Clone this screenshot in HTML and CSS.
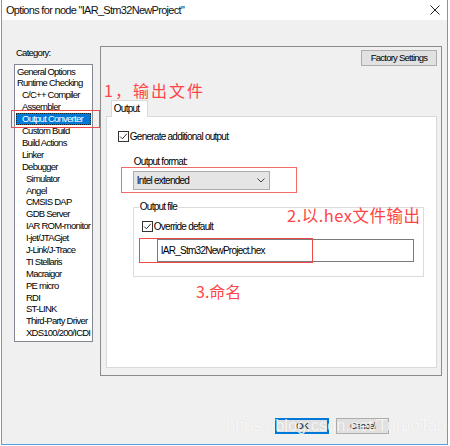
FILE: index.html
```html
<!DOCTYPE html>
<html>
<head>
<meta charset="utf-8">
<link rel="stylesheet" href="styles.css">
</head>
<body>
<div class="window">
  <div class="titlebar">
    <span class="title">Options for node "IAR_Stm32NewProject"</span>
    <svg class="close" width="10" height="10" viewBox="0 0 10 10"><path d="M0.5 0.5L9.5 9.5M9.5 0.5L0.5 9.5" stroke="#222" stroke-width="1" fill="none"/></svg>
  </div>
  <div class="body">
    <div class="main">
      <div class="category">
        <div class="cat-label">Category:</div>
        <ul class="list">
          <li class="top">General Options</li>
          <li class="top">Runtime Checking</li>
          <li class="sub">C/C++ Compiler</li>
          <li class="sub">Assembler</li>
          <li class="sub selected">Output Converter</li>
          <li class="sub">Custom Build</li>
          <li class="sub">Build Actions</li>
          <li class="sub">Linker</li>
          <li class="sub">Debugger</li>
          <li class="sub2">Simulator</li>
          <li class="sub2">Angel</li>
          <li class="sub2">CMSIS DAP</li>
          <li class="sub2">GDB Server</li>
          <li class="sub2">IAR ROM-monitor</li>
          <li class="sub2">I-jet/JTAGjet</li>
          <li class="sub2">J-Link/J-Trace</li>
          <li class="sub2">TI Stellaris</li>
          <li class="sub2">Macraigor</li>
          <li class="sub2">PE micro</li>
          <li class="sub2">RDI</li>
          <li class="sub2">ST-LINK</li>
          <li class="sub2">Third-Party Driver</li>
          <li class="sub2">XDS100/200/ICDI</li>
        </ul>
      </div>
      <div class="panel">
        <div class="panel-top">
          <button class="btn factory">Factory Settings</button>
        </div>
        <div class="tabs">
          <div class="tab">Output</div>
        </div>
        <div class="page">
          <label class="check-row first">
            <svg class="cb" width="11" height="11" viewBox="0 0 11 11"><rect x="0.5" y="0.5" width="10" height="10" fill="#fff" stroke="#333"/><path d="M2.2 5.6L4.4 7.8L8.8 2.8" stroke="#333" stroke-width="1" fill="none"/></svg>
            <span>Generate additional output</span>
          </label>
          <div class="fmt-label">Output format:</div>
          <div class="select">
            <span>Intel extended</span>
            <svg class="chev" width="8" height="5" viewBox="0 0 8 5"><path d="M0.5 0.5L4 4L7.5 0.5" stroke="#444" stroke-width="1" fill="none"/></svg>
          </div>
          <fieldset class="group">
            <legend>Output file</legend>
            <label class="check-row inner">
              <svg class="cb" width="11" height="11" viewBox="0 0 11 11"><rect x="0.5" y="0.5" width="10" height="10" fill="#fff" stroke="#333"/><path d="M2.2 5.6L4.4 7.8L8.8 2.8" stroke="#333" stroke-width="1" fill="none"/></svg>
              <span>Override default</span>
            </label>
            <div class="field">IAR_Stm32NewProject.hex</div>
          </fieldset>
        </div>
      </div>
    </div>
    <div class="buttons">
      <button class="btn ok">OK</button>
      <button class="btn cancel">Cancel</button>
    </div>
  </div>

  <div class="redbox box1"></div>
  <div class="redbox box2"></div>
  <div class="redbox box3"></div>
  <div class="note note1">1，输出文件</div>
  <div class="note note2">2.以.hex文件输出</div>
  <div class="note note3">3.命名</div>
  <div class="watermark">https://blog.csdn.net/TurboTab</div>
</div>
</body>
</html>
```
FILE: styles.css
```css
* { box-sizing: border-box; }
html, body {
  margin: 0;
  padding: 0;
  background: #ffffff;
}
body {
  width: 450px;
  height: 446px;
  overflow: hidden;
  font-family: "Liberation Sans", Arial, sans-serif;
  letter-spacing: -0.75px;
  color: #000;
}
.window {
  position: relative;
  margin-left: 1px;
  width: 447px;
  height: 445px;
  border: 1px solid #5aa0e0;
  border-top: none;
  background: #f0f0f0;
  display: flex;
  flex-direction: column;
}
.titlebar {
  height: 20px;
  background: #ffffff;
  display: flex;
  align-items: center;
  justify-content: space-between;
  padding: 0 7px 0 4px;
}
.title {
  font-size: 11px;
  letter-spacing: -0.7px;
  line-height: 20px;
  color: #111;
}
.close { display: block; }
.body {
  flex: 1;
  display: flex;
  flex-direction: column;
  padding: 26px 5px 0 12px;
}
.main {
  display: flex;
  gap: 7px;
}
.category {
  width: 79px;
  display: flex;
  flex-direction: column;
}
.cat-label {
  font-size: 9.5px;
  line-height: 14px;
  height: 14px;
  padding-left: 2px;
  margin-bottom: 4px;
}
.list {
  list-style: none;
  margin: 0;
  padding: 0.6px 0 0 0;
  height: 278px;
  background: #fff;
  border: 1px solid #828790;
}
.list li {
  font-size: 9.5px;
  line-height: 11.9px;
  height: 11.9px;
  white-space: nowrap;
  margin: 0 1px;
}
.list .top { padding-left: 1px; }
.list .sub { padding-left: 6px; }
.list .sub2 { padding-left: 10px; }
.list .selected {
  background: #0078d7;
  color: #fff;
  outline: 1px dotted #222;
  outline-offset: -1px;
}
.panel {
  width: 343px;
  height: 330px;
  border: 1px solid #8c8c8c;
  display: flex;
  flex-direction: column;
  padding: 3px 4px 7px 5px;
}
.panel-top {
  display: flex;
  justify-content: flex-end;
}
.btn {
  font-family: inherit;
  letter-spacing: inherit;
  font-size: 9.5px;
  color: #000;
  background: #e1e1e1;
  border: 1px solid #adadad;
  padding: 0;
  height: 16px;
  line-height: 14px;
}
.factory { width: 76px; }
.tabs {
  margin-top: 34px;
  padding-left: 5px;
  display: flex;
}
.tab {
  width: 37px;
  height: 17px;
  margin-bottom: -1px;
  background: #fff;
  border: 1px solid #d9d9d9;
  border-bottom: none;
  font-size: 10px;
  line-height: 15px;
  padding-left: 2px;
  position: relative;
}
.page {
  flex: 1;
  background: #fff;
  border: 1px solid #d9d9d9;
  display: flex;
  flex-direction: column;
  align-items: flex-start;
}
.check-row {
  display: flex;
  align-items: center;
  gap: 1px;
  font-size: 10px;
  line-height: 11px;
}
.cb { display: block; flex: none; }
.check-row.first {
  margin-top: 14px;
  margin-left: 11px;
}
.fmt-label {
  margin-top: 14px;
  margin-left: 27px;
  font-size: 10px;
  line-height: 12px;
}
.select {
  margin-top: 3px;
  margin-left: 26px;
  width: 137px;
  height: 19px;
  background: #e5e5e5;
  border: 1px solid #acacac;
  display: flex;
  align-items: center;
  justify-content: space-between;
  padding: 0 4px 0 3px;
  font-size: 10px;
}
.group {
  margin: 11px 0 0 26px;
  padding: 0 0 14px 0;
  width: 291px;
  border: 1px solid #dcdcdc;
  min-inline-size: 0;
}
.group legend {
  font-size: 10px;
  line-height: 12px;
  padding: 0 1px;
  margin-left: 5px;
}
.check-row.inner {
  margin-top: 8px;
  margin-left: 8px;
}
.field {
  margin-top: 7px;
  margin-left: 23px;
  width: 257px;
  height: 23px;
  border: 1px solid #7a7a7a;
  font-size: 10px;
  line-height: 21px;
  padding-left: 3px;
}
.buttons {
  margin-top: 42px;
  display: flex;
  justify-content: flex-end;
  gap: 7px;
  padding-right: 53px;
}
.ok {
  width: 54px;
  border: 1px solid #0078d7;
  box-shadow: inset 0 0 0 1px #0078d7;
}
.cancel { width: 53px; }

.redbox {
  position: absolute;
  border: 1.5px solid #ef4a4a;
}
.box1 { left: 9px; top: 110px; width: 89px; height: 18px; }
.box2 { left: 119px; top: 167px; width: 176px; height: 26px; border-color: #f26a6a; }
.box3 { left: 137px; top: 238px; width: 174px; height: 25px; }

.note {
  position: absolute;
  font-family: "Noto Sans CJK SC", "Liberation Sans", sans-serif;
  color: #ff4545;
  font-size: 16px;
  line-height: 20px;
  letter-spacing: 0;
  white-space: nowrap;
}
.note1 { left: 102px; top: 80px; letter-spacing: 2px; }
.note2 { left: 285px; top: 205px; font-size: 16.5px; letter-spacing: 0.5px; }
.note3 { left: 194px; top: 281px; }
.watermark {
  position: absolute;
  left: 224px;
  top: 416px;
  font-family: "Liberation Sans", Arial, sans-serif;
  font-size: 16.4px;
  letter-spacing: 0;
  color: rgba(255, 255, 255, 0.85);
  text-shadow: 0 0 1px rgba(0, 0, 0, 0.12);
  white-space: nowrap;
  pointer-events: none;
}
```
